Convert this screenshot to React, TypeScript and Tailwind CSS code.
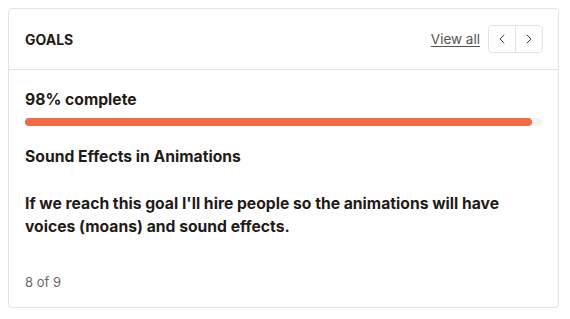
import { ChevronLeft, ChevronRight } from "lucide-react";

export default function App() {
  return (
    <div className="min-h-screen bg-white p-2 font-['Inter',sans-serif] text-[#1f1c17]">
      <div className="flex h-[300px] w-[551px] flex-col rounded-[4px] border border-[#e5e3dd] bg-white">
        <div className="flex h-[61px] items-center justify-between border-b border-[#e5e3dd] pl-[16px] pr-[15px]">
          <h2 className="text-[14px] font-bold">GOALS</h2>
          <div className="flex items-center gap-2">
            <a className="text-[13.5px] text-[#57534e] underline underline-offset-2">View all</a>
            <div className="flex h-[28px] rounded-[4px] border border-[#e5e3dd]">
              <button className="flex w-[26px] items-center justify-center text-[#4a4643]">
                <ChevronLeft size={16} strokeWidth={1.5} />
              </button>
              <span className="w-px bg-[#e5e3dd]" />
              <button className="flex w-[26px] items-center justify-center text-[#4a4643]">
                <ChevronRight size={16} strokeWidth={1.5} />
              </button>
            </div>
          </div>
        </div>

        <div className="flex flex-1 flex-col px-[16px] pt-[19px]">
          <p className="text-[15.7px] font-bold leading-[22px]">98% complete</p>
          <div className="mt-[7px] h-2 w-full rounded-full bg-[#f4f2f2]">
            <div className="h-2 rounded-full bg-[#f46a45]" style={{ width: "98%" }} />
          </div>
          <p className="mt-[20px] text-[15.7px] font-bold leading-[22px]">Sound Effects in Animations</p>
          <p className="mt-[24px] text-[15.7px] font-bold leading-[23px]">
            If we reach this goal I'll hire people so the animations will have voices (moans) and sound effects.
          </p>
          <p className="mt-[34px] text-[13px] leading-[20px] text-[#6b6866]">8 of 9</p>
        </div>
      </div>
    </div>
  );
}
